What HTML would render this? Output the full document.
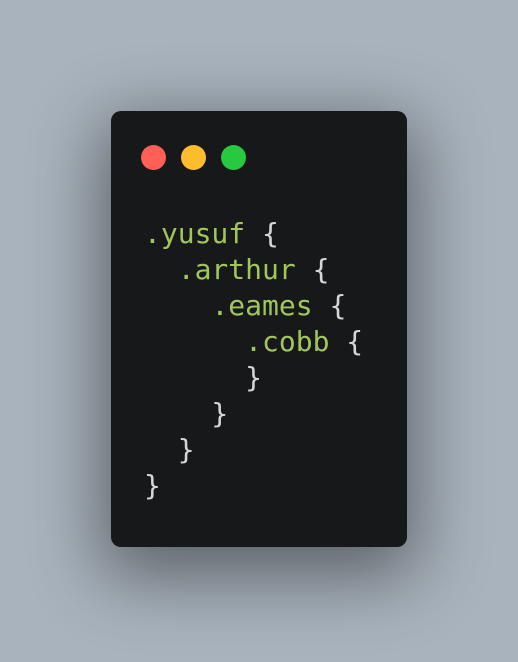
<!DOCTYPE html>
<html><head><style>
html,body{margin:0;padding:0;}
body{width:518px;height:662px;background:#a9b3bd;position:relative;overflow:hidden;}
.card{position:absolute;left:111px;top:111px;width:296px;height:436px;background:#17181a;border-radius:10px;box-shadow:0 20px 70px 10px rgba(0,0,0,0.45);}
.dot{position:absolute;top:34px;width:25px;height:25px;border-radius:50%;}
pre{position:absolute;left:33px;top:105px;margin:0;font-family:"DejaVu Sans Mono","Liberation Mono",monospace;font-size:28px;line-height:36px;color:#d4d6d8;}
.g{color:#a1c65a;}
</style></head><body>
<div class="card">
<div class="dot" style="left:30px;background:#ff5f56"></div>
<div class="dot" style="left:70px;background:#ffbd2e"></div>
<div class="dot" style="left:110px;background:#27c93f"></div>
<pre><span class="g">.yusuf</span> {
  <span class="g">.arthur</span> {
    <span class="g">.eames</span> {
      <span class="g">.cobb</span> {
      }
    }
  }
}</pre>
</div>
</body></html>
